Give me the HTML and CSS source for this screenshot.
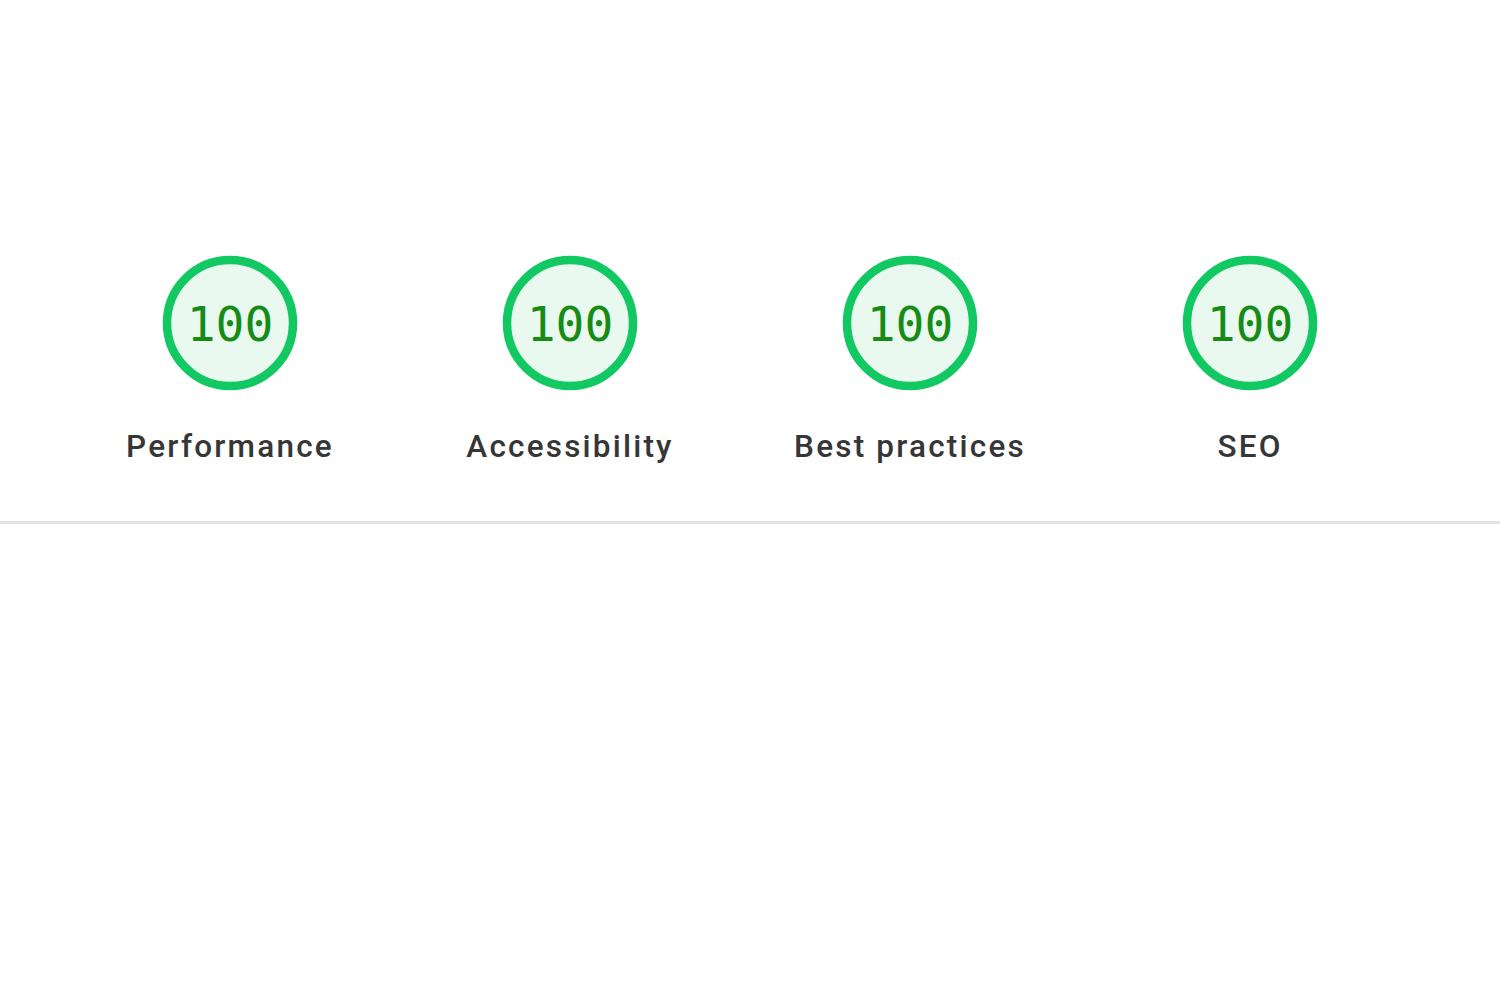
FILE: index.html
```html
<!DOCTYPE html>
<html lang="en">
<head>
<meta charset="utf-8">
<title>Lighthouse scores</title>
<link rel="stylesheet" href="styles.css">
</head>
<body>
<section class="scores">
  <div class="gauges">
    <div class="gauge">
      <div class="dial">
        <svg class="ring" viewBox="0 0 136 136" width="136" height="136"><circle cx="68" cy="68" r="63"/></svg>
        <span class="value">100</span>
      </div>
      <div class="label">Performance</div>
    </div>
    <div class="gauge">
      <div class="dial">
        <svg class="ring" viewBox="0 0 136 136" width="136" height="136"><circle cx="68" cy="68" r="63"/></svg>
        <span class="value">100</span>
      </div>
      <div class="label">Accessibility</div>
    </div>
    <div class="gauge">
      <div class="dial">
        <svg class="ring" viewBox="0 0 136 136" width="136" height="136"><circle cx="68" cy="68" r="63"/></svg>
        <span class="value">100</span>
      </div>
      <div class="label">Best practices</div>
    </div>
    <div class="gauge">
      <div class="dial">
        <svg class="ring" viewBox="0 0 136 136" width="136" height="136"><circle cx="68" cy="68" r="63"/></svg>
        <span class="value">100</span>
      </div>
      <div class="label">SEO</div>
    </div>
  </div>
</section>
<hr class="divider">
</body>
</html>
```
FILE: styles.css
```css
html, body {
  margin: 0;
  padding: 0;
  background: #ffffff;
}
body {
  width: 1500px;
  height: 1000px;
  overflow: hidden;
  font-family: Roboto, "Liberation Sans", Arial, sans-serif;
}
.scores {
  padding-top: 255px;
}
.gauges {
  display: flex;
  padding-left: 60px;
}
.gauge {
  width: 340px;
  display: flex;
  flex-direction: column;
  align-items: center;
}
.dial {
  display: grid;
  width: 136px;
  height: 136px;
}
.ring, .value {
  grid-area: 1 / 1;
}
.ring {
  display: block;
}
.ring circle {
  fill: #e9f9ef;
  stroke: #12c862;
  stroke-width: 8.5;
}
.value {
  align-self: center;
  justify-self: center;
  font-family: "DejaVu Sans Mono", monospace;
  font-size: 48px;
  line-height: 1;
  color: #168c16;
  padding-top: 1px;
}
.label {
  margin-top: 39px;
  font-size: 31.5px;
  font-weight: 500;
  line-height: 34px;
  letter-spacing: 2.2px;
  color: #363636;
  white-space: nowrap;
}
.divider {
  margin: 57px 0 0 0;
  border: 0;
  height: 3px;
  background: #e3e3e3;
}
```
